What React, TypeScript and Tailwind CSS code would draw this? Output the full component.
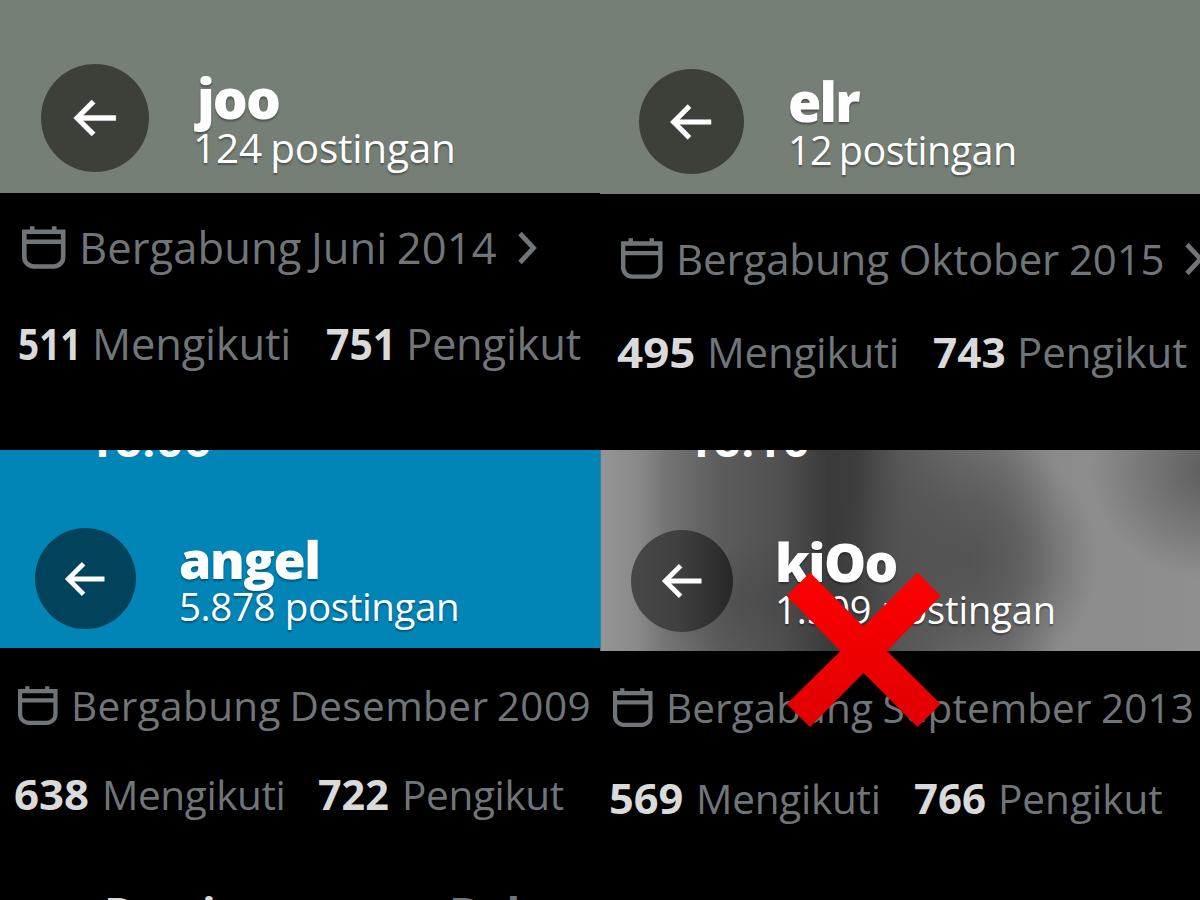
import React from "react";

type TextRun = { text: string; cls: string };

type Profile = {
  header: string;
  circle: string;
  arrow: string;
  titles: string;
  name: TextRun;
  posts: TextRun;
  status?: TextRun;
  meta: string;
  icon: string;
  joined: TextRun;
  chevron: boolean;
  stats: string;
  following: TextRun;
  followingLabel: string;
  followers: TextRun;
  followersLabel: string;
  tabs?: string;
};

const profiles: Profile[] = [
  {
    header: "h-[193px] bg-[#757f75]",
    circle: "ml-[41px] mt-[64px] size-[108px] bg-[#3c4039]",
    arrow: "size-[58px]",
    titles: "ml-[46px] pt-[73px]",
    name: { text: "joo", cls: "ml-[2px] text-[55px] tracking-[-2px]" },
    posts: { text: "124 postingan", cls: "-ml-[2px] mt-[3px] text-[40.5px] tracking-[-0.2px] [word-spacing:-2px]" },
    meta: "pl-[22px] mt-[33px] gap-[13px]",
    icon: "size-[44px]",
    joined: { text: "Bergabung Juni 2014", cls: "text-[43.5px] tracking-[0.1px] [word-spacing:-2px]" },
    chevron: true,
    stats: "mt-[52px] pl-[18px] text-[43.5px] grid-cols-[74px_234px_80px_auto]",
    following: { text: "511", cls: "scale-x-[0.85]" },
    followingLabel: "tracking-[-0.2px]",
    followers: { text: "751", cls: "scale-x-[0.94]" },
    followersLabel: "tracking-[-0.25px]",
  },
  {
    header: "h-[194px] bg-[#757f75]",
    circle: "ml-[39px] mt-[69px] size-[105px] bg-[#3c4039]",
    arrow: "size-[56px]",
    titles: "ml-[45px] pt-[76px]",
    name: { text: "elr", cls: "-ml-px text-[54px] tracking-[-1.8px]" },
    posts: { text: "12 postingan", cls: "-ml-px mt-[2px] text-[39.5px] tracking-[-0.53px] [word-spacing:-3px]" },
    meta: "pl-[21px] mt-[43px] gap-[13px]",
    icon: "size-[42px]",
    joined: { text: "Bergabung Oktober 2015", cls: "text-[42px] tracking-[-0.13px] [word-spacing:-1px]" },
    chevron: true,
    stats: "mt-[49px] pl-[17px] text-[42px] grid-cols-[90px_226px_84px_auto]",
    following: { text: "495", cls: "scale-x-[1.09]" },
    followingLabel: "tracking-[-0.2px]",
    followers: { text: "743", cls: "scale-x-[1.01]" },
    followersLabel: "tracking-[-0.1px]",
  },
  {
    header: "h-[198px] bg-[#0085b6]",
    circle: "ml-[35px] mt-[78px] size-[101px] bg-[#00435b]",
    arrow: "size-[54px]",
    titles: "ml-[43px] pt-[84px]",
    name: { text: "angel", cls: "text-[52px] tracking-[-1.4px]" },
    posts: { text: "5.878 postingan", cls: "text-[38.5px] tracking-[-0.4px]" },
    status: { text: "18.06", cls: "left-[87px]" },
    meta: "pl-[18px] mt-[36px] gap-[13px]",
    icon: "size-[40px]",
    joined: { text: "Bergabung Desember 2009", cls: "text-[40.5px] tracking-[0.4px] [word-spacing:-2.5px]" },
    chevron: false,
    stats: "mt-[45px] pl-[14px] text-[40.5px] grid-cols-[88px_216px_84px_auto]",
    following: { text: "638", cls: "scale-x-[1.08]" },
    followingLabel: "tracking-[-0.4px]",
    followers: { text: "722", cls: "scale-x-[1.02]" },
    followersLabel: "tracking-[-0.35px]",
    tabs: "mt-[73px]",
  },
  {
    header:
      "h-[201px] border-l border-[#2a86a8] bg-[radial-gradient(ellipse_120px_110px_at_610px_20px,#5c5c5c_0%,#5c5c5c80_50%,#5c5c5c00_100%),radial-gradient(ellipse_130px_130px_at_365px_110px,#4c4c4ccc_0%,#4c4c4c90_45%,#4c4c4c00_100%),radial-gradient(ellipse_150px_60px_at_180px_150px,#44444480_0%,#44444400_100%),linear-gradient(90deg,#949494_0%,#8a8a8a_6%,#747474_11%,#5c5c5c_20%,#505050_30%,#3a3a3a_38%,#3e3e3e_43%,#585858_50%,#6e6e6e_60%,#767676_67%,#8b8b8b_76%,#8f8f8f_100%)]",
    circle: "ml-[30px] mt-[80px] size-[102px] bg-[linear-gradient(90deg,#484848,#404040_45%,#272727)]",
    arrow: "size-[54px]",
    titles: "ml-[42px] pt-[87px]",
    name: { text: "kiOo", cls: "text-[53px] tracking-[-1.6px]" },
    posts: { text: "1.509 postingan", cls: "text-[38px] tracking-[-0.1px]" },
    status: { text: "18.10", cls: "left-[85px]" },
    meta: "pl-[13px] mt-[35px] gap-[13px]",
    icon: "size-[40px]",
    joined: { text: "Bergabung September 2013", cls: "text-[40.5px] tracking-[0.06px] [word-spacing:-1px]" },
    chevron: false,
    stats: "mt-[47px] pl-[9px] text-[40.5px] grid-cols-[87px_218px_84px_auto]",
    following: { text: "569", cls: "scale-x-[1.07]" },
    followingLabel: "tracking-[-0.25px]",
    followers: { text: "766", cls: "scale-x-[1.035]" },
    followersLabel: "",
    tabs: "mt-[75px]",
  },
];

function ArrowLeft({ className }: { className: string }) {
  return (
    <svg viewBox="0 0 24 24" className={className + " -ml-[3px]"} fill="white" stroke="white" strokeWidth="0.2">
      <path d="M7.414 13l5.043 5.04-1.414 1.42L3.586 12l7.457-7.46 1.414 1.42L7.414 11H21v2H7.414z" />
    </svg>
  );
}

function Calendar({ className }: { className: string }) {
  return (
    <svg viewBox="0 0 44 44" className={className + " shrink-0"} fill="none" stroke="#70757a" strokeWidth="4.6">
      <path d="M2.3 5.7H41.2V31a9.5 9.5 0 0 1-9.5 9.5H11.8a9.5 9.5 0 0 1-9.5-9.5z" />
      <path d="M2.3 15.8H41M10.2 0.2V6M32.2 0.2V6" />
    </svg>
  );
}

function Chevron() {
  return (
    <svg viewBox="0 0 22 34" className="ml-[7px] h-[34px] w-[22px] shrink-0" fill="none" stroke="#70757a" strokeWidth="4.8">
      <path d="M3 2.5L16.5 17L3 31.5" />
    </svg>
  );
}

function Panel({ p }: { p: Profile }) {
  return (
    <section className="flex h-[450px] w-[600px] flex-col overflow-hidden bg-black">
      <header className={"relative flex shrink-0 items-start overflow-hidden text-white " + p.header}>
        {p.status && (
          <span className={"absolute -top-[39px] font-['Roboto'] text-[48px] leading-[60px] font-bold " + p.status.cls}>
            {p.status.text}
          </span>
        )}
        <button className={"flex shrink-0 items-center justify-center rounded-full " + p.circle}>
          <ArrowLeft className={p.arrow} />
        </button>
        <div className={"flex flex-col whitespace-nowrap [text-shadow:0_2px_2px_rgba(0,0,0,0.35)] " + p.titles}>
          <h2 className={"leading-[50px] font-extrabold " + p.name.cls}>{p.name.text}</h2>
          <p className={"leading-[44px] " + p.posts.cls}>{p.posts.text}</p>
        </div>
      </header>
      <div className={"flex h-[44px] shrink-0 items-center leading-[44px] whitespace-nowrap text-[#70757a] " + p.meta}>
        <Calendar className={p.icon} />
        <span className={p.joined.cls}>{p.joined.text}</span>
        {p.chevron && <Chevron />}
      </div>
      <div className={"grid h-[44px] shrink-0 leading-[44px] whitespace-nowrap text-[#70757a] " + p.stats}>
        <b className={"origin-left justify-self-start text-[#dadada] " + p.following.cls}>{p.following.text}</b>
        <span className={p.followingLabel}>Mengikuti</span>
        <b className={"origin-left justify-self-start text-[#dadada] " + p.followers.cls}>{p.followers.text}</b>
        <span className={p.followersLabel}>Pengikut</span>
      </div>
      {p.tabs && (
        <nav className={"grid shrink-0 grid-cols-[345px_auto] pl-[104px] text-[45px] leading-[46px] font-bold " + p.tabs}>
          <span className="text-[#dadada]">Postingan</span>
          <span className="text-[#70757a]">Balasan</span>
        </nav>
      )}
    </section>
  );
}

export default function App() {
  return (
    <main className="relative grid h-[900px] w-[1200px] grid-cols-2 overflow-hidden bg-black font-['Open_Sans',sans-serif]">
      {profiles.map((p) => (
        <Panel key={p.name.text} p={p} />
      ))}
      <svg viewBox="0 0 156 156" className="absolute top-[572px] left-[786px] size-[156px]">
        <defs>
          <linearGradient id="cross" x1="0" y1="0" x2="0" y2="1">
            <stop offset="0" stopColor="#ff0000" />
            <stop offset="1" stopColor="#e00000" />
          </linearGradient>
        </defs>
        <path
          d="M0.7 24L24 0.5L77.5 54.5L131.5 0.5L154.7 24L101 79L154.7 132L131.5 155L77.5 101L24 155L0.7 132L54.5 79z"
          fill="url(#cross)"
        />
      </svg>
    </main>
  );
}
